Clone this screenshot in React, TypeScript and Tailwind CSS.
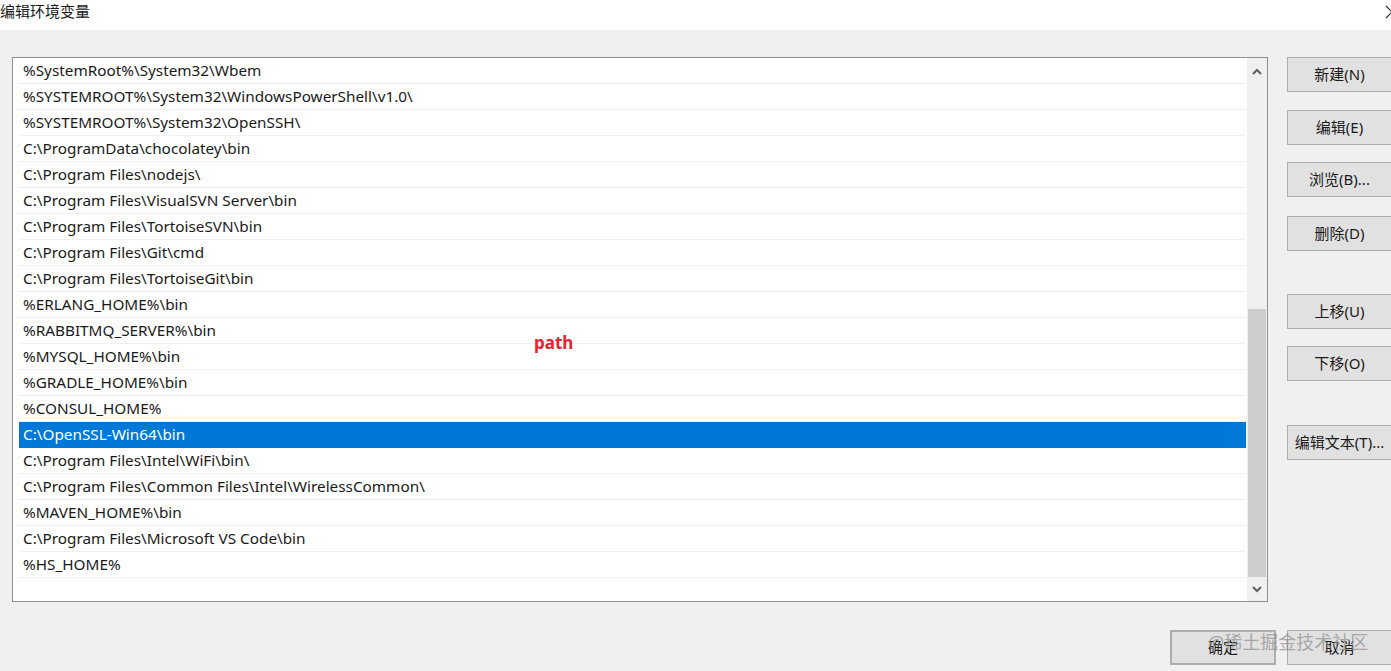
const paths = [
  "%SystemRoot%\\System32\\Wbem",
  "%SYSTEMROOT%\\System32\\WindowsPowerShell\\v1.0\\",
  "%SYSTEMROOT%\\System32\\OpenSSH\\",
  "C:\\ProgramData\\chocolatey\\bin",
  "C:\\Program Files\\nodejs\\",
  "C:\\Program Files\\VisualSVN Server\\bin",
  "C:\\Program Files\\TortoiseSVN\\bin",
  "C:\\Program Files\\Git\\cmd",
  "C:\\Program Files\\TortoiseGit\\bin",
  "%ERLANG_HOME%\\bin",
  "%RABBITMQ_SERVER%\\bin",
  "%MYSQL_HOME%\\bin",
  "%GRADLE_HOME%\\bin",
  "%CONSUL_HOME%",
  "C:\\OpenSSL-Win64\\bin",
  "C:\\Program Files\\Intel\\WiFi\\bin\\",
  "C:\\Program Files\\Common Files\\Intel\\WirelessCommon\\",
  "%MAVEN_HOME%\\bin",
  "C:\\Program Files\\Microsoft VS Code\\bin",
  "%HS_HOME%",
];

const selected = 14;

const WinButton = ({ label, className = "" }: { label: string; className?: string }) => (
  <div
    className={`w-[105px] h-[35px] shrink-0 flex items-center justify-center bg-[#e1e1e1] border border-[#adadad] text-[15px] text-[#1a1a1a] ${className}`}
  >
    {label}
  </div>
);

const App = () => {
  return (
    <div
      className="w-[1391px] h-[671px] overflow-hidden bg-[#f0f0f0] flex flex-col"
      style={{ fontFamily: '"Noto Sans", "Noto Sans CJK SC", sans-serif' }}
    >
      {/* title bar */}
      <div className="h-[30px] shrink-0 bg-white flex items-start justify-between">
        <span className="text-[15px] leading-[22px] text-[#1a1a1a]">编辑环境变量</span>
        <svg width="8" height="14" viewBox="0 0 8 14" className="mt-[5px] mr-[-2px]">
          <path d="M1 1 L7 7 L1 13" fill="none" stroke="#333" strokeWidth="1.2" />
        </svg>
      </div>

      <div className="flex pt-[27px] pl-[12px]">
        {/* list box */}
        <div className="relative w-[1256px] h-[545px] shrink-0 bg-white border border-[#8f8f8f] flex">
          <div className="flex-1 pl-[6px] pr-[1px]">
            {paths.map((p, i) => (
              <div
                key={i}
                className={`h-[26px] flex items-center pl-[4px] text-[15.3px] ${
                  i === selected
                    ? "bg-[#0078d7] text-white border-b border-[#0078d7]"
                    : "text-[#1a1a1a] border-b border-[#f0f0f0]"
                }`}
              >
                {p}
              </div>
            ))}
          </div>
          {/* scrollbar */}
          <div className="w-[20px] shrink-0 bg-[#f0f0f0] flex flex-col">
            <div className="h-[26px] flex items-center justify-center">
              <svg width="10" height="7" viewBox="0 0 10 7">
                <path d="M1 6 L5 2 L9 6" fill="none" stroke="#606060" strokeWidth="2" />
              </svg>
            </div>
            <div className="h-[225px]" />
            <div className="h-[268px] mx-[1px] bg-[#cdcdcd]" />
            <div className="flex-1 flex items-center justify-center">
              <svg width="10" height="7" viewBox="0 0 10 7">
                <path d="M1 1 L5 5 L9 1" fill="none" stroke="#606060" strokeWidth="2" />
              </svg>
            </div>
          </div>
          <span className="absolute left-[521px] top-[272px] text-[17px] font-bold text-[#e5222f]">
            path
          </span>
        </div>

        {/* side buttons */}
        <div className="flex flex-col ml-[19px]">
          <WinButton label="新建(N)" />
          <WinButton label="编辑(E)" className="mt-[18px]" />
          <WinButton label="浏览(B)..." className="mt-[17px]" />
          <WinButton label="删除(D)" className="mt-[19px]" />
          <WinButton label="上移(U)" className="mt-[43px]" />
          <WinButton label="下移(O)" className="mt-[17px]" />
          <WinButton label="编辑文本(T)..." className="mt-[44px]" />
        </div>
      </div>

      {/* bottom buttons */}
      <div className="relative flex pl-[1170px] mt-[28px]">
        <WinButton label="确定" className="w-[106px] border-2 border-[#0078d7]" />
        <WinButton label="取消" className="ml-[11px]" />
        <span className="absolute left-[1208px] top-[-1px] text-[18px] text-[#8a8a8a]/70">
          @稀土掘金技术社区
        </span>
      </div>
    </div>
  );
};

export default App;
